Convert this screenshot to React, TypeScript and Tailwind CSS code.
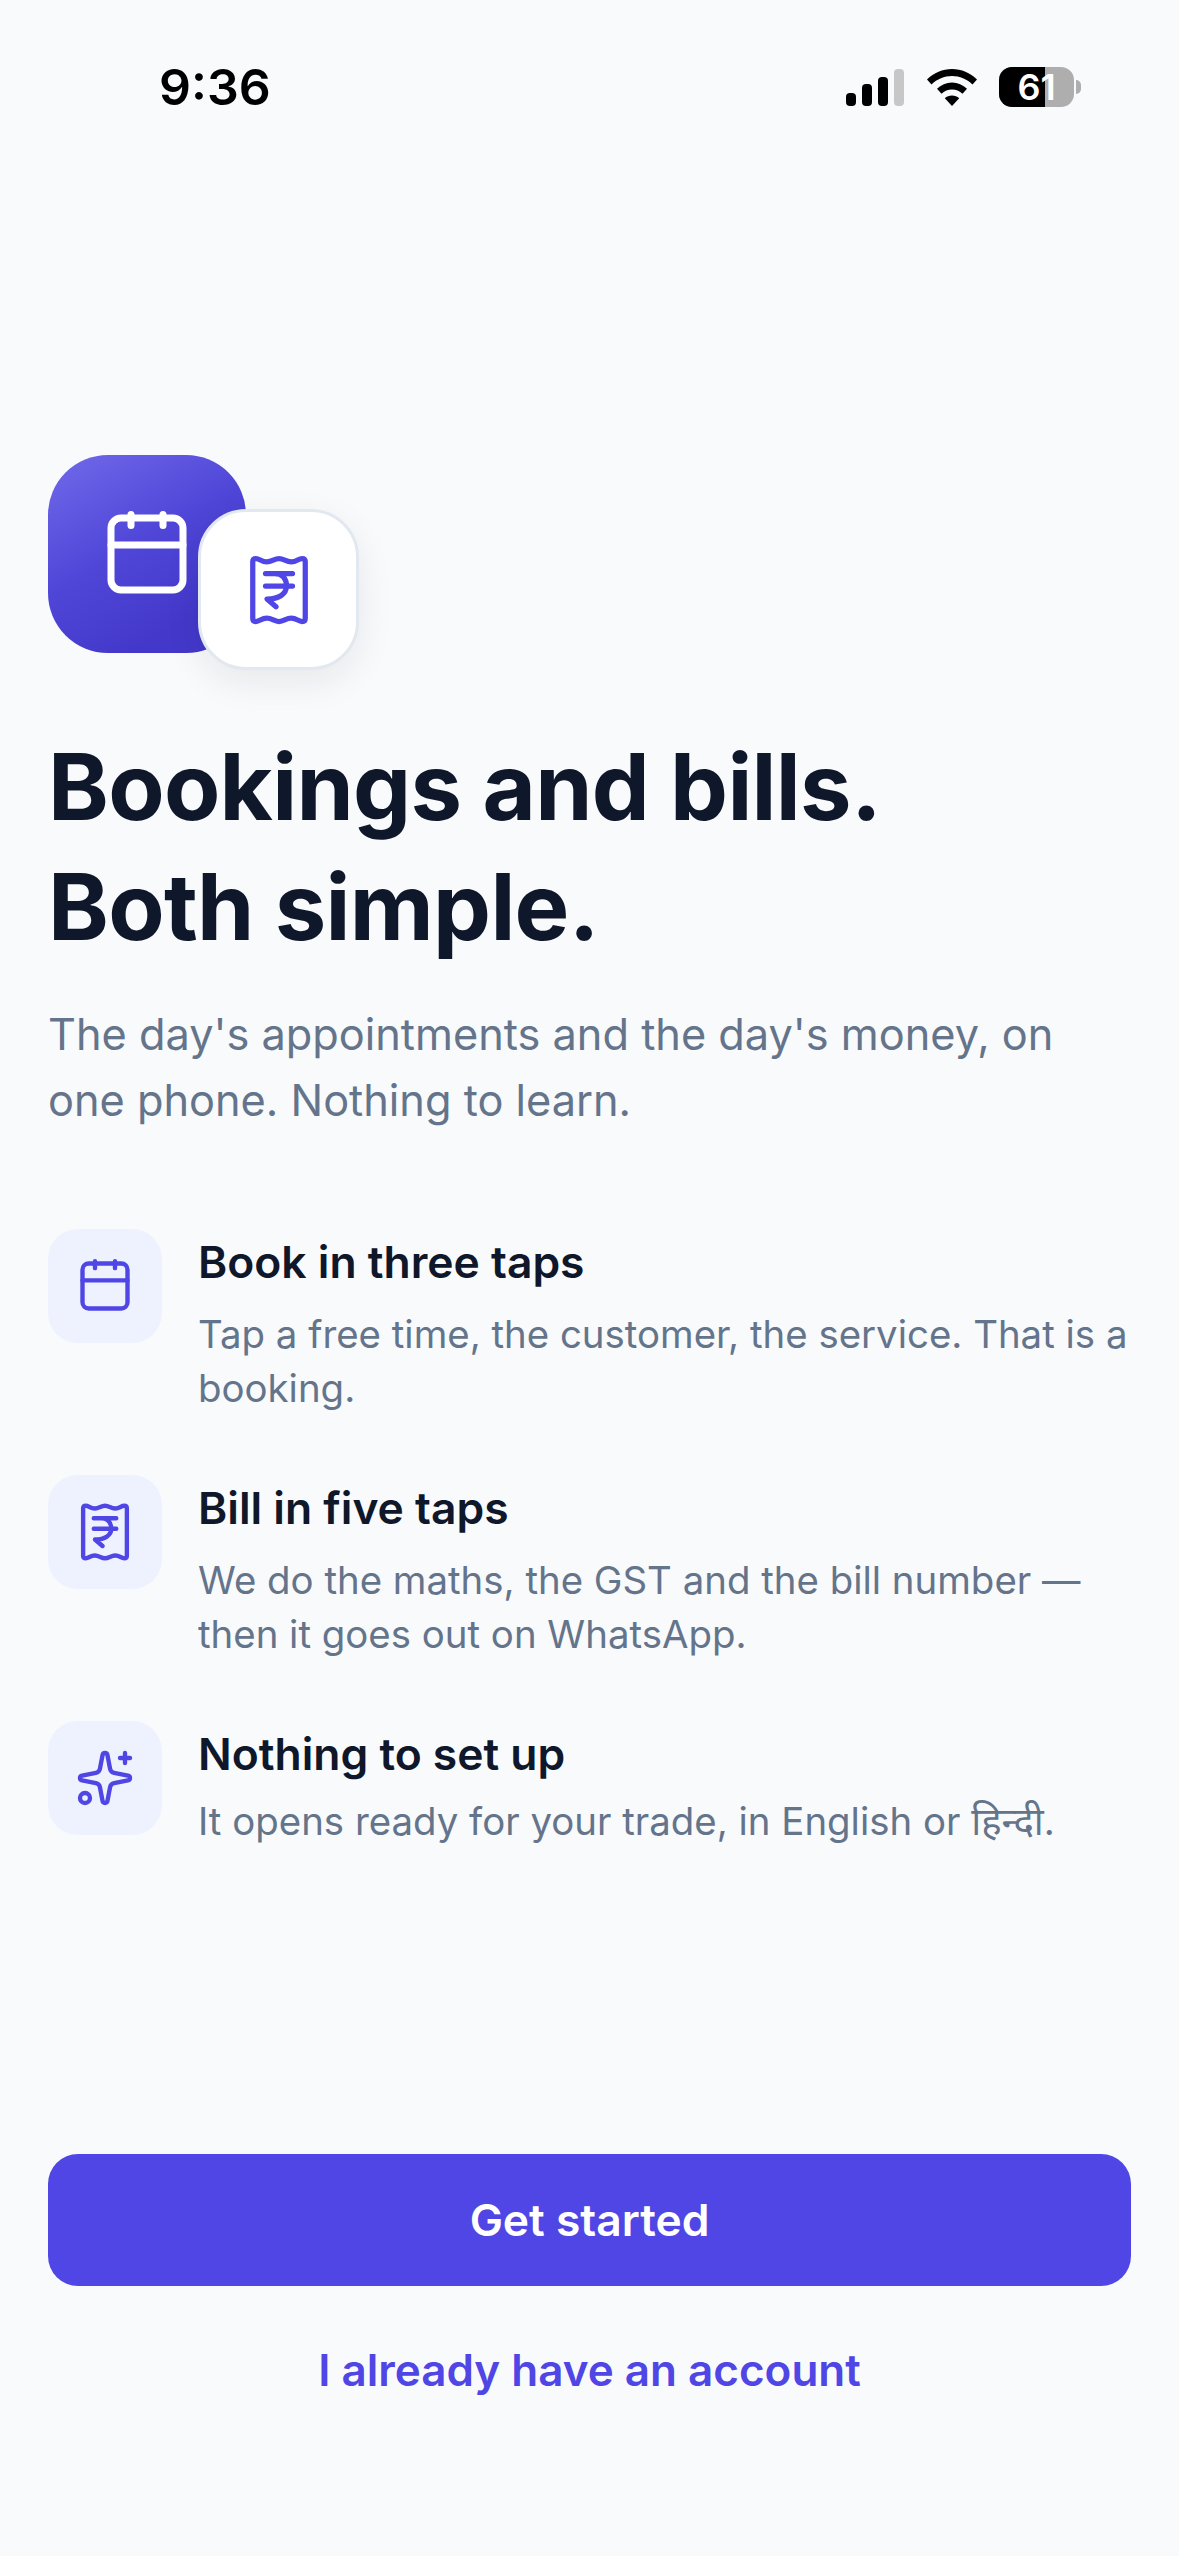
import { Sparkles } from "lucide-react";

function CalendarIcon({ className }: { className: string }) {
  return (
    <svg viewBox="0 0 24 24" fill="none" stroke="currentColor" strokeWidth={1.75} strokeLinecap="round" strokeLinejoin="round" className={className}>
      <rect x="3" y="3" width="18" height="18" rx="2.5" />
      <path d="M8 2.100v2.750M16 2.100v2.750M3 9.750h18" />
    </svg>
  );
}

function ReceiptIcon({ className }: { className: string }) {
  return (
    <svg viewBox="0 0 24 24" fill="none" stroke="currentColor" strokeWidth={1.75} strokeLinecap="round" strokeLinejoin="round" className={className}>
      <path d="M3.250 2.500Q3.250 1.500 4.300 1.500C5.600 1.500 6.100 2.600 7.900 2.600S10.400 1.500 12 1.500 14.300 2.600 16.100 2.600 18.400 1.500 19.700 1.500Q20.750 1.500 20.750 2.500V21.500Q20.750 22.500 19.700 22.500C18.400 22.500 17.900 21.400 16.100 21.400S13.600 22.500 12 22.500 9.700 21.400 7.900 21.400 5.600 22.500 4.300 22.500Q3.250 22.500 3.250 21.500Z" />
      <path d="M7.500 6.500h9M7.500 10.700h9M10.500 6.500c2.500 0 4 1.600 4 4.200 0 2.600-2.500 4.300-6.500 4.300l3 2.600" />
    </svg>
  );
}

function StatusBar() {
  return (
    <div className="flex h-[174px] items-center justify-between pl-[159px] pr-[98px]">
      <span className="font-['Inter',sans-serif] text-[50px] leading-none font-semibold text-black">9:36</span>
      <div className="flex items-center">
        <svg width="58" height="37" viewBox="0 0 58 37" className="mr-[23px]">
          <rect x="0" y="24" width="10" height="13" rx="4" fill="#000" />
          <rect x="16" y="15" width="10" height="22" rx="4" fill="#000" />
          <rect x="32" y="8" width="10" height="29" rx="4" fill="#000" />
          <rect x="48" y="0" width="10" height="37" rx="4" fill="#c7c7c7" />
        </svg>
        <svg width="50" height="37" viewBox="0 0 50 37" className="mr-[22px]">
          <path d="M25 0C34.500 0 43 3.800 50 10.500L45.500 15.500C39.800 10 32.800 7 25 7S10.200 10 4.500 15.500L0 10.500C7 3.800 15.500 0 25 0Z" fill="#000" />
          <path d="M25 13.500C30.800 13.500 36 15.800 40 19.800L35.500 24.800C32.700 22 29 20.500 25 20.500S17.300 22 14.500 24.800L10 19.800C14 15.800 19.200 13.500 25 13.500Z" fill="#000" />
          <path d="M25 26.500C27.800 26.500 30.300 27.500 32.200 29.200L25 37 17.800 29.200C19.700 27.500 22.200 26.500 25 26.500Z" fill="#000" />
        </svg>
        <div className="relative flex h-[40px] w-[75px] items-center justify-center rounded-[13px] bg-[#aeaeae]">
          <div className="absolute inset-y-0 left-0 w-[46px] rounded-l-[13px] bg-black" />
          <span className="relative font-['Inter',sans-serif] text-[36px] leading-none font-semibold text-white">61</span>
        </div>
        <div className="ml-[2px] h-[14px] w-[5px] rounded-r-full bg-[#aeaeae]" />
      </div>
    </div>
  );
}

function Feature({ icon, title, descClass, children }: { icon: React.ReactNode; title: string; descClass: string; children: React.ReactNode }) {
  return (
    <div className="flex gap-[36px]">
      <div className="flex h-[114px] w-[114px] shrink-0 items-center justify-center rounded-[30px] bg-[#eef2ff] text-[#4f46e5]">{icon}</div>
      <div className="min-w-0 flex-1">
        <div className="text-[44.4px] leading-[66px] font-semibold text-[#0f172a]">{title}</div>
        <div className={`${descClass} text-[38.4px] leading-[54px] text-[#64748b]`}>{children}</div>
      </div>
    </div>
  );
}

export default function App() {
  return (
    <div className="flex h-[2556px] w-[1179px] flex-col overflow-hidden bg-[#f9fafc] font-['Inter','Noto_Sans','Noto_Sans_Devanagari',sans-serif]">
      <StatusBar />
      <div className="flex flex-1 flex-col px-[48px] pt-[281px] pb-[156px]">
        <div className="relative h-[215px] w-[311px]">
          <div className="flex h-[198px] w-[198px] items-center justify-center rounded-[60px] bg-[linear-gradient(150deg,#716aea_0%,#4f46d8_45%,#4338ca_78%)] text-white">
            <CalendarIcon className="h-[96px] w-[96px]" />
          </div>
          <div className="absolute top-[54px] left-[150px] flex h-[161px] w-[161px] items-center justify-center rounded-[48px] border-[3px] border-[#e2e8f0] bg-white text-[#4f46e5] shadow-[0_12px_36px_rgba(15,23,42,0.08)]">
            <ReceiptIcon className="h-[72px] w-[72px]" />
          </div>
        </div>
        <h1 className="mt-[57px] text-[92px] leading-[120px] font-bold tracking-[-0.7px] text-[#0f172a]">
          Bookings and bills.
          <br />
          Both simple.
        </h1>
        <p className="mt-[34px] text-[43.3px] leading-[66px] text-[#64748b]">
          The day's appointments and the day's money, on one phone. Nothing to learn.
        </p>
        <div className="mt-[96px] flex flex-col gap-[60px]">
          <Feature descClass="mt-[12px]" icon={<CalendarIcon className="h-[60px] w-[60px]" />} title="Book in three taps">
            Tap a free time, the customer, the service. That is a booking.
          </Feature>
          <Feature descClass="mt-[12px]" icon={<ReceiptIcon className="h-[60px] w-[60px]" />} title="Bill in five taps">
            We do the maths, the GST and the bill number — then it goes out on WhatsApp.
          </Feature>
          <Feature descClass="mt-[7px]" icon={<Sparkles className="h-[60px] w-[60px]" strokeWidth={1.75} />} title="Nothing to set up">
            It opens ready for your trade, in English or हिन्दी.
          </Feature>
        </div>
        <button className="mt-auto flex h-[132px] w-full items-center justify-center rounded-[30px] bg-[#4f46e5] text-[44.4px] font-semibold text-white">
          Get started
        </button>
        <div className="mt-[54px] text-center text-[44px] leading-[60px] font-semibold text-[#4f46e5]">I already have an account</div>
      </div>
    </div>
  );
}
